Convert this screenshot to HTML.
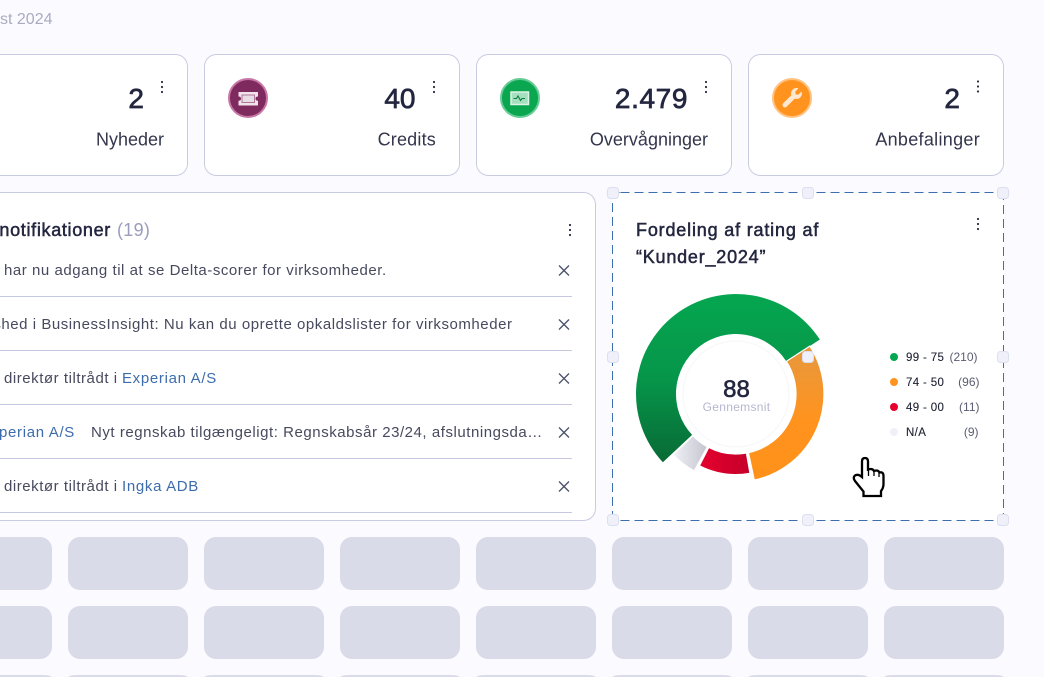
<!DOCTYPE html>
<html lang="da">
<head>
<meta charset="utf-8">
<title>Dashboard</title>
<style>
html,body{margin:0;padding:0;width:1044px;height:677px;overflow:hidden;background:#fafaff}
svg{display:block}
text{font-family:"Liberation Sans",sans-serif;white-space:pre}
.n{font-size:28px;fill:#23263f;stroke:#23263f;stroke-width:.7;text-anchor:end}
.l{font-size:18px;fill:#33364c;text-anchor:end}
.t{font-size:18px;fill:#23263f;stroke:#23263f;stroke-width:.5}
.r{font-size:15px;fill:#474a5e;letter-spacing:.54px}
.a{font-size:15px;fill:#3d6cab;letter-spacing:.68px}
.lg{font-size:11.5px;fill:#1e2233;stroke:#1e2233;stroke-width:.12;letter-spacing:.35px}
.c{font-size:12px;fill:#5a5d70;text-anchor:end}
.card{fill:#fff;stroke:#c9cbe2;stroke-width:1}
.sk{fill:#dadbe8}
.ln{stroke:#c5c8e0;stroke-width:1}
.x{stroke:#4a5068;stroke-width:1.3;fill:none}
.h{fill:#eff0fa;stroke:#dcdfee;stroke-width:1}
.d{fill:#2b2e45}
</style>
</head>
<body>
<svg width="1044" height="677" viewBox="0 0 1044 677" xmlns="http://www.w3.org/2000/svg">
<defs>
<linearGradient id="gG" x1="0" y1="0" x2="0" y2="1"><stop offset="0" stop-color="#05a650"/><stop offset=".5" stop-color="#06964a"/><stop offset="1" stop-color="#086a35"/></linearGradient>
<linearGradient id="gO" x1="0" y1="0" x2="0" y2="1"><stop offset="0" stop-color="#e6983f"/><stop offset=".55" stop-color="#ff931e"/><stop offset="1" stop-color="#ff9119"/></linearGradient>
<linearGradient id="gR" x1="0" y1="0" x2="1" y2="0"><stop offset="0" stop-color="#e6002e"/><stop offset="1" stop-color="#c4002a"/></linearGradient>
<linearGradient id="gY" x1="0" y1="0" x2="1" y2="0"><stop offset="0" stop-color="#f0f0f6"/><stop offset="1" stop-color="#c4c5cf"/></linearGradient>
</defs>

<text x="0" y="24" fill="#a9abc0" style="font-size:16px">st 2024</text>

<!-- KPI cards -->
<rect class="card" x="-68" y="54.5" width="255.5" height="121" rx="12"/>
<rect class="card" x="204.500" y="54.5" width="255" height="121" rx="12"/>
<rect class="card" x="476.500" y="54.5" width="255" height="121" rx="12"/>
<rect class="card" x="748.500" y="54.5" width="255" height="121" rx="12"/>

<text class="n" x="144" y="108">2</text>
<text class="l" x="164" y="145.500">Nyheder</text>
<circle class="d" cx="162" cy="82" r="1.100"/><circle class="d" cx="162" cy="87" r="1.100"/><circle class="d" cx="162" cy="92" r="1.100"/>

<circle cx="248" cy="98" r="19" fill="#7f2a5e" stroke="#c777a6" stroke-width="2"/>
<path d="M239 92.500h18.500v3.600a2.500 2.500 0 0 0 0 5v3.900H239v-3.900a2.500 2.500 0 0 0 0-5z" fill="#f1e1ea" stroke="#f1e1ea" stroke-width="1" stroke-linejoin="round"/>
<rect x="242" y="95" width="12.500" height="7.500" fill="#e9dde5" stroke="#a86a90" stroke-width=".9"/>
<text class="n" x="415.500" y="108">40</text>
<text class="l" x="436" y="145.500" letter-spacing=".2">Credits</text>
<circle class="d" cx="434" cy="82" r="1.100"/><circle class="d" cx="434" cy="87" r="1.100"/><circle class="d" cx="434" cy="92" r="1.100"/>

<circle cx="520" cy="98" r="19" fill="#0aa650" stroke="#66cc95" stroke-width="2"/>
<rect x="511" y="92" width="17.500" height="12.500" fill="#a6dfbf" stroke="#dcf3e5" stroke-width="1.500"/>
<path d="M513.500 98.500h3l1.500-2.500 2.500 4.500 1.500-2h3" fill="none" stroke="#0a7f40" stroke-width="1.100"/>
<text class="n" x="688" y="108" letter-spacing=".6">2.479</text>
<text class="l" x="708" y="145.500">Overvågninger</text>
<circle class="d" cx="706" cy="82" r="1.100"/><circle class="d" cx="706" cy="87" r="1.100"/><circle class="d" cx="706" cy="92" r="1.100"/>

<circle cx="792" cy="98" r="19" fill="#ff931e" stroke="#ffc27f" stroke-width="2"/>
<path transform="translate(782.500 88) scale(.038)" fill="#ffe8d0" d="M507.730 109.100c-2.240-9.030-13.540-12.090-20.120-5.510l-74.360 74.360-67.880-11.310-11.310-67.880 74.360-74.360c6.620-6.620 3.430-17.900-5.660-20.160-47.380-11.740-99.550.91-136.580 37.930-39.640 39.640-50.550 97.100-34.050 147.200L18.740 402.760c-24.990 24.990-24.990 65.510 0 90.500 24.990 24.990 65.510 24.990 90.500 0l213.210-213.210c50.120 16.710 107.470 5.680 147.370-34.220 37.070-37.070 49.700-89.320 37.910-136.730z"/>
<text class="n" x="960" y="108">2</text>
<text class="l" x="980" y="145.500" letter-spacing=".3">Anbefalinger</text>
<circle class="d" cx="978" cy="81.500" r="1.100"/><circle class="d" cx="978" cy="86.500" r="1.100"/><circle class="d" cx="978" cy="91.500" r="1.100"/>

<!-- Notifications panel -->
<rect class="card" x="-68" y="192.500" width="663.500" height="328" rx="12"/>
<text class="t" x="111" y="236" text-anchor="end" letter-spacing=".68">notifikationer</text>
<text x="117" y="236" style="font-size:18px" fill="#9a9cbd" letter-spacing=".3">(19)</text>
<circle class="d" cx="570" cy="225" r="1.100"/><circle class="d" cx="570" cy="230" r="1.100"/><circle class="d" cx="570" cy="235" r="1.100"/>

<text class="r" x="4" y="275">har nu adgang til at se Delta-scorer for virksomheder.</text>
<text class="r" x="512.500" y="329" text-anchor="end">Published i BusinessInsight: Nu kan du oprette opkaldslister for virksomheder</text>
<text class="r" x="4" y="383">direktør tiltrådt i</text>
<text class="a" x="122" y="383">Experian A/S</text>
<text class="a" x="75" y="437" text-anchor="end">Experian A/S</text>
<text class="r" x="91" y="437">Nyt regnskab tilgængeligt: Regnskabsår 23/24, afslutningsda…</text>
<text class="r" x="4" y="491">direktør tiltrådt i</text>
<text class="a" x="122" y="491">Ingka ADB</text>

<line class="ln" x1="0" x2="572" y1="296.500" y2="296.500"/>
<line class="ln" x1="0" x2="572" y1="350.500" y2="350.500"/>
<line class="ln" x1="0" x2="572" y1="404.500" y2="404.500"/>
<line class="ln" x1="0" x2="572" y1="458.500" y2="458.500"/>
<line class="ln" x1="0" x2="572" y1="512.500" y2="512.500"/>

<path class="x" d="M559 265.500l10 10M569 265.500l-10 10"/>
<path class="x" d="M559 319.500l10 10M569 319.500l-10 10"/>
<path class="x" d="M559 373.500l10 10M569 373.500l-10 10"/>
<path class="x" d="M559 427.500l10 10M569 427.500l-10 10"/>
<path class="x" d="M559 481.500l10 10M569 481.500l-10 10"/>

<!-- Rating panel -->
<rect x="612.500" y="192.500" width="391" height="328" fill="#fff" rx="8"/>
<rect x="612.500" y="192.500" width="391" height="328" fill="none" stroke="#3d6fb0" stroke-width="1" stroke-dasharray="9 5" rx="8"/>
<text class="t" x="636" y="236" letter-spacing=".82">Fordeling af rating af</text>
<text class="t" x="636" y="263" letter-spacing=".78">“Kunder_2024”</text>
<circle class="d" cx="978" cy="219" r="1.100"/><circle class="d" cx="978" cy="224" r="1.100"/><circle class="d" cx="978" cy="229" r="1.100"/>

<!-- Donut -->
<path fill="url(#gG)" d="M662.860 462.200A100 100 0 1 1 819.870 339.540L786.320 361.320A60 60 0 1 0 692.120 434.920Z"/>
<path fill="url(#gO)" stroke="#fff" stroke-width="1.200" d="M786.320 361.320L809.800 346.100A88 88 0 0 1 754.300 480.070L748.470 452.690A60 60 0 0 0 786.320 361.320Z"/>
<path fill="url(#gR)" stroke="#fff" stroke-width="1.200" d="M746.420 453.090L749.980 473.280A80.500 80.500 0 0 1 699.450 465.730L708.760 447.460A60 60 0 0 0 746.420 453.090Z"/>
<path fill="url(#gY)" stroke="#fff" stroke-width="1.200" d="M707.370 446.730L694.250 470.900A87.500 87.500 0 0 1 673.060 454.790L692.840 435.680A60 60 0 0 0 707.370 446.730Z"/>
<circle cx="736" cy="394" r="59.500" fill="#fff"/>
<circle cx="736" cy="394" r="53" fill="#fff" stroke="#f6f6fa" stroke-width="1"/>
<text x="736.500" y="397" text-anchor="middle" style="font-size:24px" fill="#23263f" stroke="#23263f" stroke-width=".6">88</text>
<text x="736.500" y="411" text-anchor="middle" style="font-size:12px" fill="#b5b7cf" letter-spacing=".3">Gennemsnit</text>

<!-- Legend -->
<circle cx="894" cy="357" r="4" fill="#05a650"/>
<text class="lg" x="906" y="361">99 - 75</text><text class="c" x="977.500" y="361">(210)</text>
<circle cx="894" cy="382" r="4" fill="#ff931e"/>
<text class="lg" x="906" y="386">74 - 50</text><text class="c" x="979.500" y="386">(96)</text>
<circle cx="894" cy="407" r="4" fill="#e6002e"/>
<text class="lg" x="906" y="411">49 - 00</text><text class="c" x="979.500" y="411">(11)</text>
<circle cx="894" cy="432" r="4" fill="#f0f0f8"/>
<text class="lg" x="906" y="436">N/A</text><text class="c" x="978.500" y="436">(9)</text>

<!-- Selection handles -->
<rect class="h" x="607.500" y="187.500" width="11" height="11" rx="3"/>
<rect class="h" x="802.500" y="187.500" width="11" height="11" rx="3"/>
<rect class="h" x="997.500" y="187.500" width="11" height="11" rx="3"/>
<rect class="h" x="607.500" y="351.500" width="11" height="11" rx="3"/>
<rect class="h" x="802.500" y="351.500" width="11" height="11" rx="3"/>
<rect class="h" x="997.500" y="351.500" width="11" height="11" rx="3"/>
<rect class="h" x="607.500" y="514.500" width="11" height="11" rx="3"/>
<rect class="h" x="802.500" y="514.500" width="11" height="11" rx="3"/>
<rect class="h" x="997.500" y="514.500" width="11" height="11" rx="3"/>

<!-- Cursor -->
<path d="M862 477V461.500Q862 458 865 458Q868 458 868 461.500V469.500Q872.500 468 874 471Q878 469.500 879.500 472.500Q883.500 471.500 883.500 476V484Q883.500 488 881 491V496H863.500V491.500L855 481Q852.500 477.500 855 475.500Q858 473.500 862 477Z" fill="#fff" stroke="#000" stroke-width="2.300" stroke-linejoin="miter"/>
<path d="M868.500 470v6M874 471v5M879 473v4" fill="none" stroke="#000" stroke-width="1.300"/>

<!-- Skeleton grid -->
<rect class="sk" x="-68" y="537" width="120" height="53" rx="12"/>
<rect class="sk" x="68" y="537" width="120" height="53" rx="12"/>
<rect class="sk" x="204" y="537" width="120" height="53" rx="12"/>
<rect class="sk" x="340" y="537" width="120" height="53" rx="12"/>
<rect class="sk" x="476" y="537" width="120" height="53" rx="12"/>
<rect class="sk" x="612" y="537" width="120" height="53" rx="12"/>
<rect class="sk" x="748" y="537" width="120" height="53" rx="12"/>
<rect class="sk" x="884" y="537" width="120" height="53" rx="12"/>
<rect class="sk" x="-68" y="606" width="120" height="53" rx="12"/>
<rect class="sk" x="68" y="606" width="120" height="53" rx="12"/>
<rect class="sk" x="204" y="606" width="120" height="53" rx="12"/>
<rect class="sk" x="340" y="606" width="120" height="53" rx="12"/>
<rect class="sk" x="476" y="606" width="120" height="53" rx="12"/>
<rect class="sk" x="612" y="606" width="120" height="53" rx="12"/>
<rect class="sk" x="748" y="606" width="120" height="53" rx="12"/>
<rect class="sk" x="884" y="606" width="120" height="53" rx="12"/>
<path class="sk" d="M-68 677Q-66 675 -58 675H42Q50 675 52 677Z"/>
<path class="sk" d="M68 677Q70 675 78 675H178Q186 675 188 677Z"/>
<path class="sk" d="M204 677Q206 675 214 675H314Q322 675 324 677Z"/>
<path class="sk" d="M340 677Q342 675 350 675H450Q458 675 460 677Z"/>
<path class="sk" d="M476 677Q478 675 486 675H586Q594 675 596 677Z"/>
<path class="sk" d="M612 677Q614 675 622 675H722Q730 675 732 677Z"/>
<path class="sk" d="M748 677Q750 675 758 675H858Q866 675 868 677Z"/>
<path class="sk" d="M884 677Q886 675 894 675H994Q1002 675 1004 677Z"/>
</svg>
</body>
</html>
